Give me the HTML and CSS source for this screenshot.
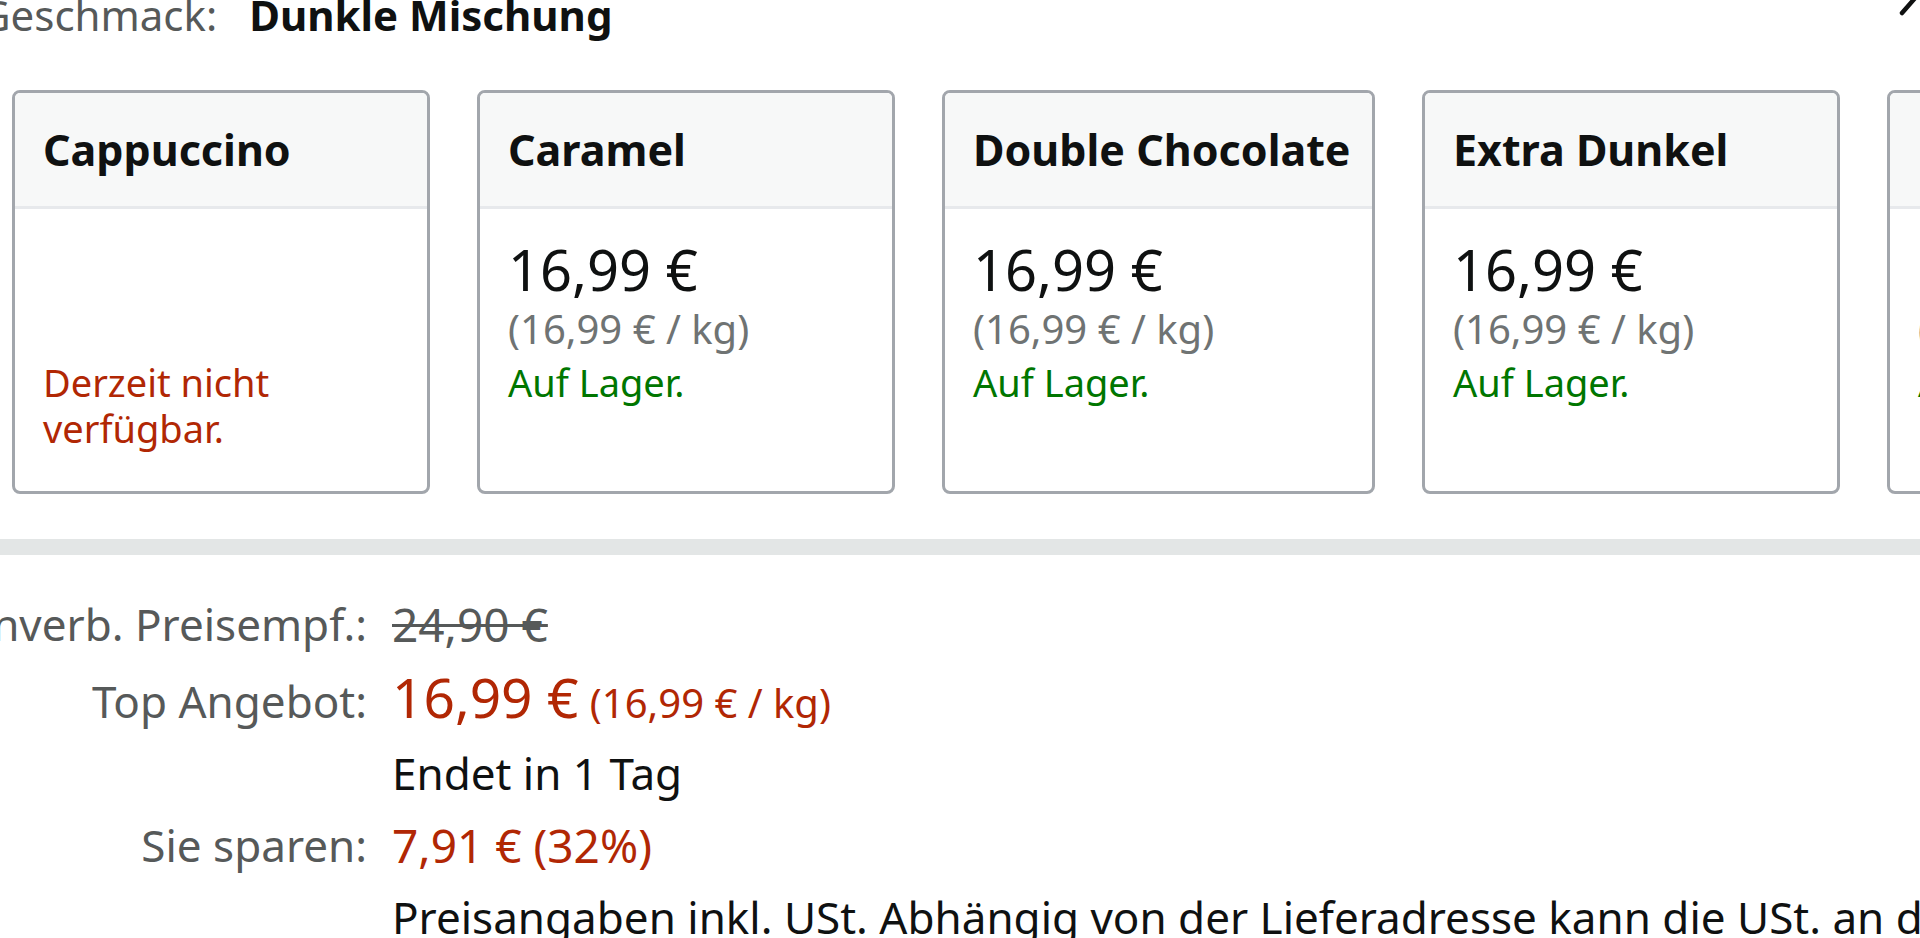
FILE: index.html
```html
<!DOCTYPE html>
<html lang="de">
<head>
<meta charset="utf-8">
<title>Geschmack: Dunkle Mischung</title>
<link rel="stylesheet" href="styles.css">
</head>
<body>
<div class="page">
  <svg class="corner-icon" width="40" height="24" viewBox="0 0 40 24" aria-hidden="true">
    <line x1="22" y1="13" x2="36" y2="-3" stroke="#0f1111" stroke-width="4.5" stroke-linecap="round"/>
  </svg>

  <div class="flavor-line">
    <span class="flavor-label">Geschmack:</span>
    <span class="flavor-value">Dunkle Mischung</span>
  </div>

  <div class="cards">
    <div class="card">
      <div class="card-head">Cappuccino</div>
      <div class="card-body">
        <div class="price-gap"></div>
        <div class="status status-out">Derzeit nicht verfügbar.</div>
      </div>
    </div>
    <div class="card">
      <div class="card-head">Caramel</div>
      <div class="card-body">
        <div class="card-price">16,99 €</div>
        <div class="card-unit">(16,99 € / kg)</div>
        <div class="status status-in">Auf Lager.</div>
      </div>
    </div>
    <div class="card card-wide">
      <div class="card-head">Double Chocolate</div>
      <div class="card-body">
        <div class="card-price">16,99 €</div>
        <div class="card-unit">(16,99 € / kg)</div>
        <div class="status status-in">Auf Lager.</div>
      </div>
    </div>
    <div class="card">
      <div class="card-head">Extra Dunkel</div>
      <div class="card-body">
        <div class="card-price">16,99 €</div>
        <div class="card-unit">(16,99 € / kg)</div>
        <div class="status status-in">Auf Lager.</div>
      </div>
    </div>
    <div class="card">
      <div class="card-head">Haselnuss</div>
      <div class="card-body">
        <div class="card-price">16,99 €</div>
        <div class="card-unit">(16,99 € / kg)</div>
        <div class="status status-in">Auf Lager.</div>
      </div>
    </div>
  </div>

  <div class="divider"></div>

  <div class="pricing">
    <div class="p-label">Unverb. Preisempf.:</div>
    <div class="p-value"><span class="strike">24,90 €</span></div>

    <div class="p-label row-offer">Top Angebot:</div>
    <div class="p-value row-offer"><span class="offer-price">16,99 €</span> <span class="offer-unit">(16,99 € / kg)</span></div>

    <div class="p-label"></div>
    <div class="p-value dark">Endet in 1 Tag</div>

    <div class="p-label">Sie sparen:</div>
    <div class="p-value red savings">7,91 € (32%)</div>

    <div class="p-label"></div>
    <div class="p-value dark">Preisangaben inkl. USt. Abhängig von der Lieferadresse kann die USt. an der Kasse variieren.</div>
  </div>
</div>
</body>
</html>
```

FILE: styles.css
```css
html, body {
  margin: 0;
  padding: 0;
  width: 1920px;
  height: 938px;
  overflow: hidden;
  background: #ffffff;
}

.page {
  position: relative;
  width: 1920px;
  height: 938px;
  overflow: hidden;
  font-family: "Noto Sans", "Open Sans", sans-serif;
  color: #0f1111;
}

.corner-icon {
  position: absolute;
  top: 0;
  right: 0;
}

.flavor-line {
  display: flex;
  align-items: baseline;
  gap: 32px;
  margin-top: -10px;
  margin-left: -20px;
  height: 50px;
  line-height: 50px;
  font-size: 42px;
  white-space: nowrap;
}

.flavor-label {
  color: #565959;
}

.flavor-value {
  font-weight: 700;
  color: #0f1111;
}

.cards {
  display: flex;
  gap: 47px;
  margin-top: 50px;
  padding-left: 12px;
}

.card {
  flex: 0 0 auto;
  box-sizing: border-box;
  width: 418px;
  height: 404px;
  border: 3px solid #a2a6ac;
  border-radius: 8px;
  overflow: hidden;
  display: flex;
  flex-direction: column;
}

.card-wide {
  width: 433px;
}

.card-head {
  box-sizing: border-box;
  height: 116px;
  display: flex;
  align-items: center;
  padding: 0 28px 0 28px;
  background: #f7f8f8;
  border-bottom: 3px solid #e7e9ec;
  font-size: 43px;
  font-weight: 700;
  line-height: 50px;
  white-space: nowrap;
}

.card-body {
  padding: 27px 28px 0 28px;
}

.price-gap {
  height: 123px;
}

.card-price {
  font-size: 56px;
  line-height: 66px;
  color: #0f1111;
}

.card-unit {
  font-size: 40px;
  line-height: 54px;
  color: #6f7373;
  white-space: nowrap;
}

.status {
  font-size: 38px;
  line-height: 46px;
}

.card-unit + .status {
  margin-top: 3px;
}

.status-in {
  color: #007600;
}

.status-out {
  color: #b12704;
}

.divider {
  margin-top: 45px;
  height: 16px;
  background: #e3e6e6;
}

.pricing {
  display: grid;
  grid-template-columns: 407px 1fr;
  column-gap: 25px;
  margin-left: -40px;
  padding-top: 33px;
  font-size: 44px;
  line-height: 72px;
  white-space: nowrap;
}

.p-label {
  text-align: right;
  color: #565959;
}

.p-value {
  color: #565959;
}

.row-offer {
  padding-top: 4px;
}

.strike {
  font-size: 46px;
  text-decoration: line-through;
  text-decoration-thickness: 3px;
}

.offer-price {
  font-size: 55px;
  line-height: 1;
  color: #b12704;
}

.offer-unit {
  font-size: 40px;
  line-height: 1;
  color: #b12704;
}

.savings {
  font-size: 46px;
}

.dark {
  color: #0f1111;
}

.red {
  color: #b12704;
}
```
